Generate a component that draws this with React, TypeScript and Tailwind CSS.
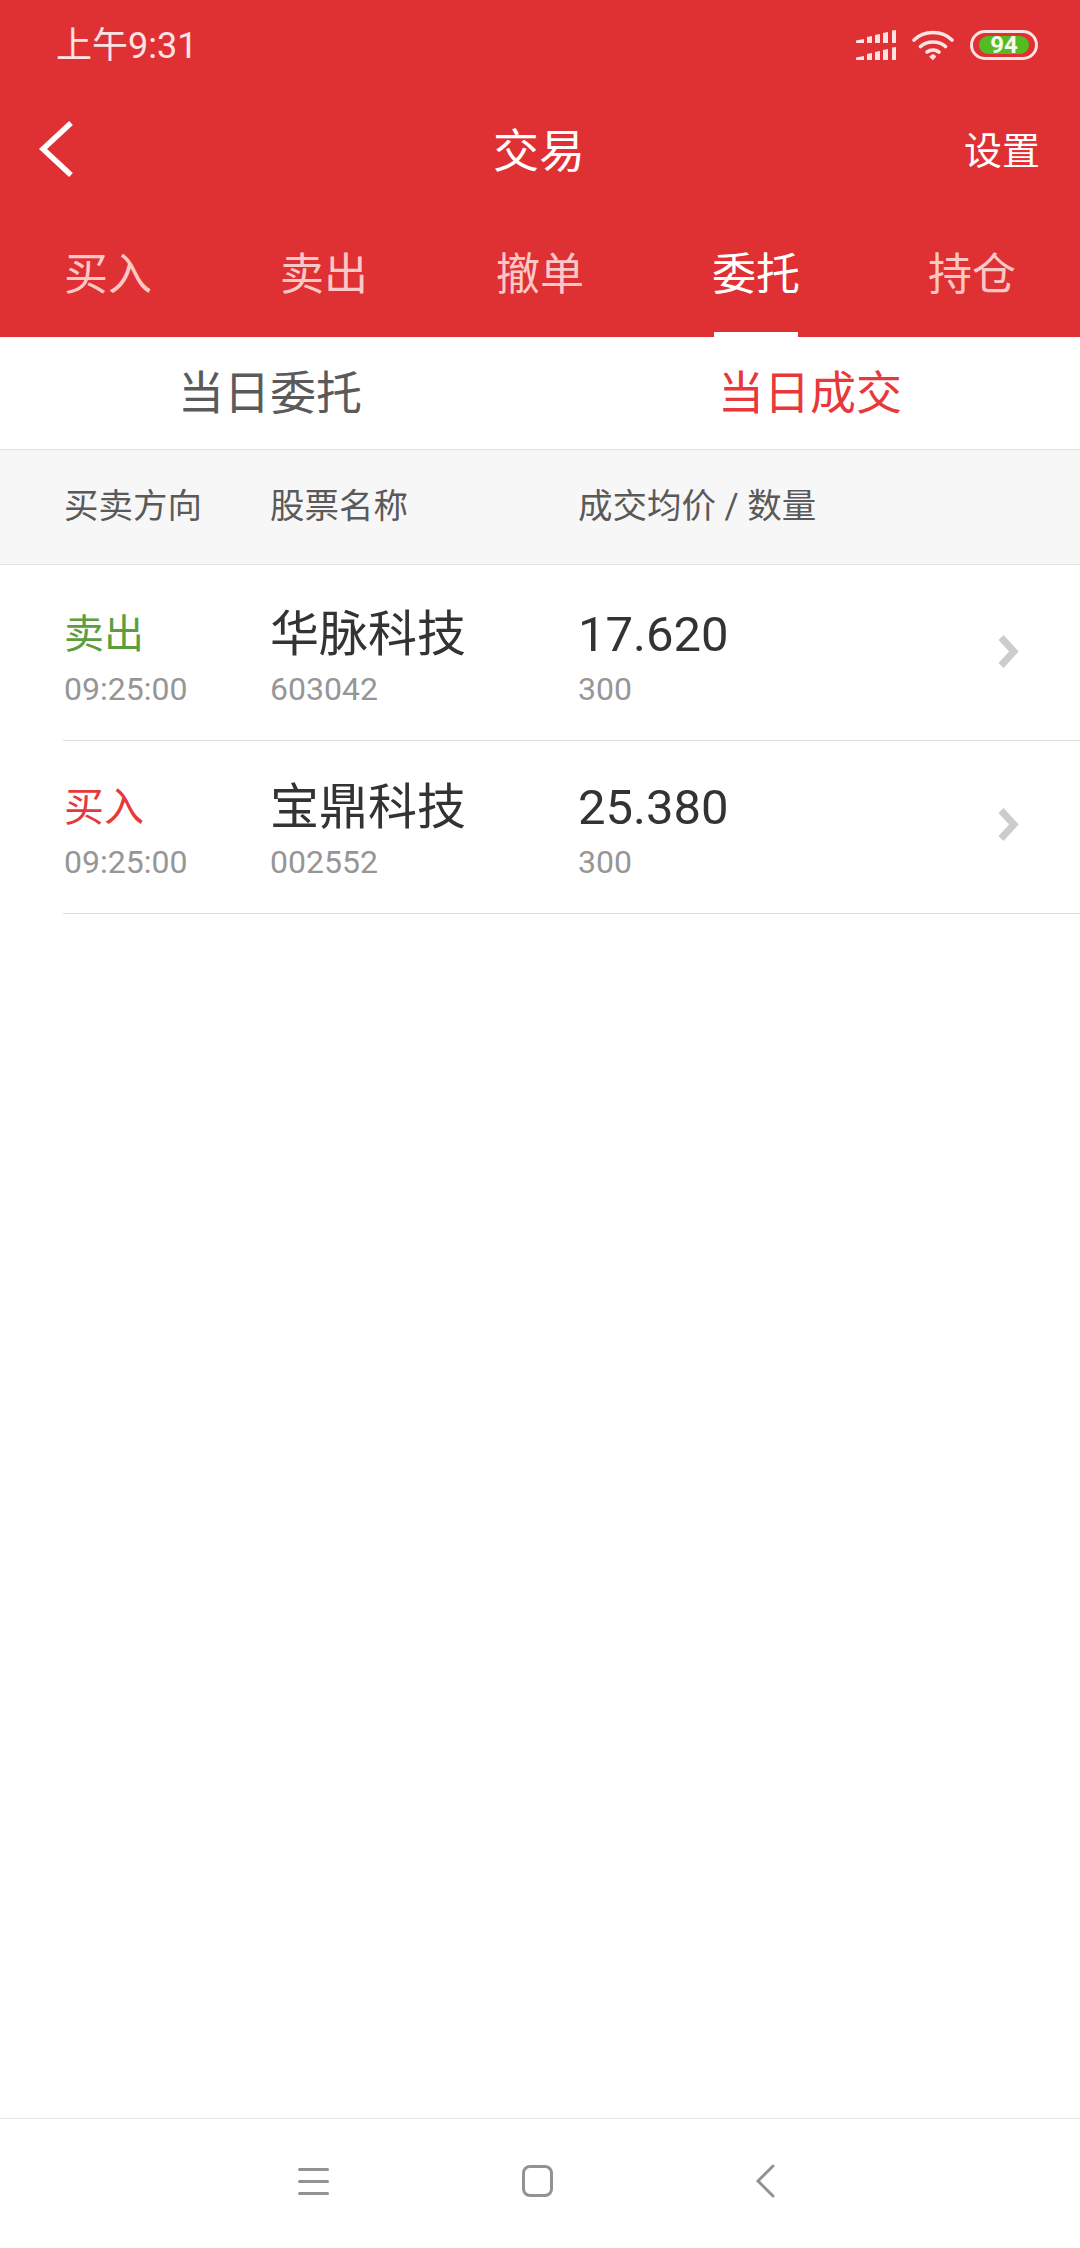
const tabs = ["买入", "卖出", "撤单", "委托", "持仓"];

const trades = [
  { side: "卖出", sideColor: "text-[#5c9e3f]", time: "09:25:00", name: "华脉科技", code: "603042", price: "17.620", qty: "300", rowClass: "h-[176px] pt-[12px]" },
  { side: "买入", sideColor: "text-[#e8383b]", time: "09:25:00", name: "宝鼎科技", code: "002552", price: "25.380", qty: "300", rowClass: "h-[173px] pt-[9px]" },
];

function StatusIcons() {
  return (
    <div className="flex items-center">
      <svg width="40" height="31" viewBox="0 0 40 31" fill="#fde3e3">
        <path d="M0 10.500 L8 9 V13 H0 Z M11 7 L16 6 V13 H11 Z M19 5 L24 4 V13 H19 Z M27 3 L32 2 V13 H27 Z M36 0.500 L40 0 V13 H36 Z" />
        <path d="M0 27.500 L8 26 V30 H0 Z M11 24 L16 23 V30 H11 Z M19 22 L24 21 V30 H19 Z M27 20 L32 19 V30 H27 Z M36 17.500 L40 17 V30 H36 Z" />
      </svg>
      <svg className="ml-[16px]" width="42" height="31" viewBox="0 0 42 31" fill="none" stroke="#fde3e3" strokeWidth="3.600" strokeLinecap="round">
        <path d="M2 10 C12 0 30 0 40 10" />
        <path d="M8.500 16.500 C15 10.500 27 10.500 33.500 16.500" />
        <path d="M15 22 C18.500 19.500 23.500 19.500 27 22" />
        <path d="M18 26.500 L21 24.500 L24 26.500 L21 29.500 Z" fill="#fde3e3" strokeWidth="1" />
      </svg>
      <div className="ml-[16px] flex h-[30px] w-[68px] items-center rounded-full border-[3px] border-[#fde3e3] px-[6px]">
        <div className="flex h-[18px] w-[53px] items-center justify-center rounded-full bg-[#55bb22] font-['Roboto'] text-[24px] font-bold text-[#f4fbee]">
          94
        </div>
      </div>
    </div>
  );
}

export default function App() {
  return (
    <div className="flex h-[2248px] w-[1080px] flex-col overflow-hidden bg-white font-['Roboto','Noto_Sans_CJK_SC',sans-serif]">
      <div className="h-[337px] shrink-0 bg-[#df3133] text-white">
        <div className="flex h-[90px] items-center justify-between pl-[56px] pr-[42px]">
          <span className="mt-[2px] text-[36px] text-[#fde3e3]">上午9:31</span>
          <StatusIcons />
        </div>
        <div className="grid h-[122px] grid-cols-3 items-center pl-[38px] pr-[40px]">
          <svg className="mt-[-4px]" width="36" height="56" viewBox="0 0 36 56" fill="none" stroke="white" strokeWidth="5.500">
            <path d="M33 2 L5 28 L33 54" />
          </svg>
          <span className="text-center text-[46px]">交易</span>
          <span className="text-right text-[38px]">设置</span>
        </div>
        <div className="flex h-[125px]">
          {tabs.map((tab, i) => (
            <div key={tab} className="flex flex-1 flex-col items-center">
              <div className={`flex h-[120px] items-center pt-[5px] text-[44px] ${i === 3 ? "text-white" : "text-[#fbc8c8]"}`}>{tab}</div>
              {i === 3 && <div className="h-[5px] w-[84px] bg-white" />}
            </div>
          ))}
        </div>
      </div>

      <div className="flex h-[113px] shrink-0 border-b border-[#e0e0e0] text-[46px]">
        <div className="flex flex-1 items-center justify-center text-[#5a5a5a]">当日委托</div>
        <div className="flex flex-1 items-center justify-center text-[#e8383b]">当日成交</div>
      </div>

      <div className="flex h-[115px] shrink-0 items-center border-b border-[#e0e0e0] bg-[#f7f7f7] pl-[64px] text-[34.500px] text-[#5a5a5a]">
        <span className="w-[206px]">买卖方向</span>
        <span className="w-[308px]">股票名称</span>
        <span>成交均价 / 数量</span>
      </div>

      {trades.map((t) => (
        <div key={t.code} className={`ml-[63px] flex shrink-0 items-center border-b border-[#dddddd] pl-[1px] ${t.rowClass}`}>
          <div className="w-[206px]">
            <div className={`h-[58px] text-[40px] leading-[58px] ${t.sideColor}`}>{t.side}</div>
            <div className="mt-[2px] text-[32px] leading-[46px] text-[#969696]">{t.time}</div>
          </div>
          <div className="w-[308px]">
            <div className="h-[58px] text-[49px] leading-[58px] text-[#333333]">{t.name}</div>
            <div className="mt-[2px] text-[32px] leading-[46px] text-[#969696]">{t.code}</div>
          </div>
          <div className="flex-1">
            <div className="h-[58px] text-[49px] leading-[58px] text-[#333333]">{t.price}</div>
            <div className="mt-[2px] text-[32px] leading-[46px] text-[#969696]">{t.qty}</div>
          </div>
          <svg className="mr-[61px] mt-[-14px]" width="21" height="33" viewBox="0 0 21 33" fill="none" stroke="#cccccc" strokeWidth="7">
            <path d="M3 2.500 L16 16.500 L3 30.500" />
          </svg>
        </div>
      ))}

      <div className="flex-1" />

      <div className="flex h-[130px] shrink-0 items-center border-t border-[#e6e6e6] pb-[5px]">
        <div className="ml-[298px] flex flex-col gap-[9px]">
          <div className="h-[3px] w-[31px] rounded-full bg-[#929292]" />
          <div className="h-[3px] w-[31px] rounded-full bg-[#929292]" />
          <div className="h-[3px] w-[31px] rounded-full bg-[#929292]" />
        </div>
        <div className="ml-[193px] h-[32px] w-[31px] rounded-[8px] border-[3px] border-[#929292]" />
        <svg className="ml-[202px]" width="20" height="34" viewBox="0 0 20 34" fill="none" stroke="#929292" strokeWidth="3" strokeLinecap="round">
          <path d="M18 2 L3 17 L18 32" />
        </svg>
      </div>
    </div>
  );
}
